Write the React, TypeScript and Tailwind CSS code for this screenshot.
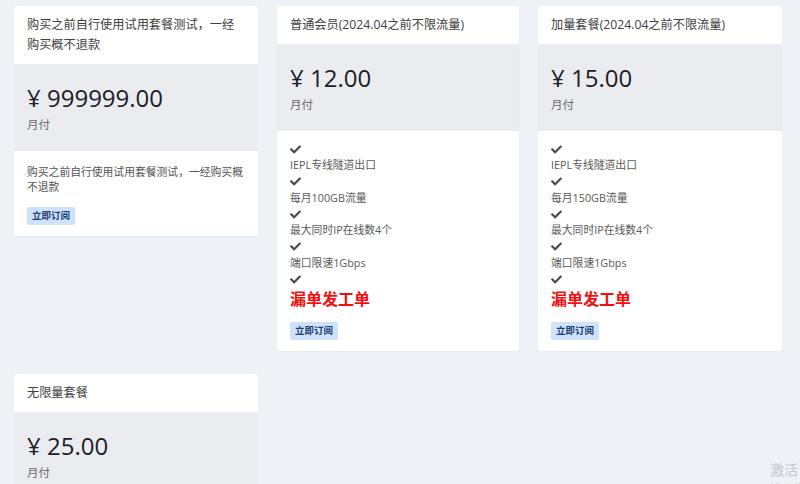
import { FaCheck } from 'react-icons/fa'

type Plan = {
  title: string
  price: string
  desc?: string
  features?: string[]
  note?: string
}

const plans: Plan[] = [
  {
    title: '购买之前自行使用试用套餐测试，一经购买概不退款',
    price: '999999.00',
    desc: '购买之前自行使用试用套餐测试，一经购买概不退款',
  },
  {
    title: '普通会员(2024.04之前不限流量)',
    price: '12.00',
    features: ['IEPL专线隧道出口', '每月100GB流量', '最大同时IP在线数4个', '端口限速1Gbps'],
    note: '漏单发工单',
  },
  {
    title: '加量套餐(2024.04之前不限流量)',
    price: '15.00',
    features: ['IEPL专线隧道出口', '每月150GB流量', '最大同时IP在线数4个', '端口限速1Gbps'],
    note: '漏单发工单',
  },
  {
    title: '无限量套餐',
    price: '25.00',
  },
]

function Check() {
  return (
    <div className="h-4 flex items-center">
      <FaCheck className="w-[11px] h-[11px] text-[#4a4a4a]" />
    </div>
  )
}

function PlanCard({ plan }: { plan: Plan }) {
  return (
    <div className="bg-white rounded-[3px] shadow-[0_1px_2px_rgba(0,0,0,0.04)] overflow-hidden">
      {/* Header */}
      <div className="pl-[13px] pr-[14px] py-[9px] text-[12.2px] leading-5 text-[#404040]">
        {plan.title}
      </div>

      {/* Price */}
      <div className="bg-[#eaecef] px-[13px] pt-[18px] pb-[17px]">
        <div className="text-[24px] leading-8 text-[#1d2126]">¥ {plan.price}</div>
        <div className="mt-0.5 text-[11.5px] leading-[18px] text-[#6b6b6b]">月付</div>
      </div>

      {/* Body */}
      {plan.desc && (
        <div className="px-[13px] pt-[13px] pb-[11px]">
          <div className="text-[10.8px] leading-[15px] text-[#555]">{plan.desc}</div>
          <Subscribe />
        </div>
      )}
      {plan.features && (
        <div className="px-[13px] pt-[10px] pb-[11px]">
          <div className="flex flex-col">
            {plan.features.map((f) => (
              <div key={f}>
                <Check />
                <div className="text-[10.8px] leading-[16.5px] text-[#5a5a5a]">{f}</div>
              </div>
            ))}
            <Check />
            <div className="text-[16px] leading-5 font-bold text-[#f01010] mt-0.5">{plan.note}</div>
          </div>
          <Subscribe />
        </div>
      )}
    </div>
  )
}

function Subscribe() {
  return (
    <button className="mt-[13px] h-[18px] flex items-center bg-[#cfe2fb] text-[#1d3f75] text-[9.5px] font-bold px-[5px] rounded-[2px]">
      立即订阅
    </button>
  )
}

export default function App() {
  return (
    <div
      className="relative w-[800px] h-[484px] overflow-hidden bg-[#eef1f6] pl-[14px] pt-[6px]"
      style={{ fontFamily: '"Open Sans", "Noto Sans CJK SC", sans-serif' }}
    >
      <div className="grid grid-cols-[244px_242px_244px] gap-x-[19px] gap-y-[23px] items-start">
        {plans.map((p) => (
          <PlanCard key={p.title} plan={p} />
        ))}
      </div>

      {/* Windows activation watermark */}
      <div className="absolute left-[770px] top-[460px] whitespace-nowrap text-[#c4c7cc] pointer-events-none">
        <div className="text-[14px] leading-5">激活 Windows</div>
        <div className="text-[10px] leading-4">转到"设置"以激活 Windows。</div>
      </div>
    </div>
  )
}
